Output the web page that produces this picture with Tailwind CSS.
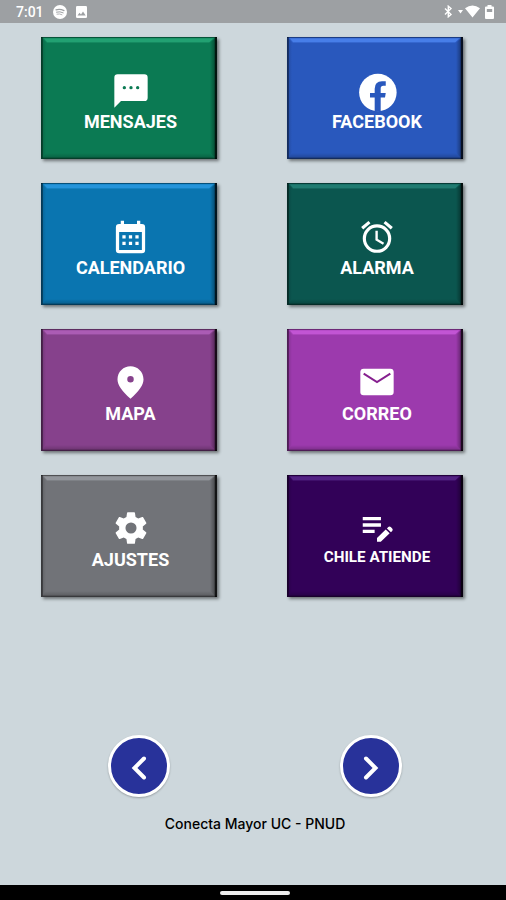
<!DOCTYPE html>
<html lang="es">
<head>
<meta charset="utf-8">
<title>Conecta Mayor UC</title>
<script src="https://cdn.jsdelivr.net/npm/@tailwindcss/browser@4"></script>
</head>
<body class="w-[506px] h-[900px] overflow-hidden bg-[#cdd7dc] flex flex-col font-['Roboto',sans-serif]">
<svg class="absolute size-0">
  <defs>
    <linearGradient id="dr"><stop offset="0" stop-color="#000" stop-opacity="0"/><stop offset="1" stop-color="#000" stop-opacity=".35"/></linearGradient>
    <linearGradient id="dl"><stop offset="0" stop-color="#000" stop-opacity=".15"/><stop offset="1" stop-color="#000" stop-opacity="0"/></linearGradient>
    <linearGradient id="db" x1="0" y1="0" x2="0" y2="1"><stop offset="0" stop-color="#000" stop-opacity="0"/><stop offset="1" stop-color="#000" stop-opacity=".2"/></linearGradient>
  </defs>
  <symbol id="bevel" viewBox="0 0 176 122">
    <path fill="url(#dr)" d="M174 1v120l-5-5V6z"/>
    <path fill="url(#dl)" d="M1 1l4 5v110l-4 5z"/>
    <path fill="url(#db)" d="M1 121l4-5h164l5 5z"/>
    <path fill="currentColor" fill-opacity=".35" d="M2 1h171l-5 5H6z"/>
    <path fill="currentColor" fill-opacity=".75" d="M3 1.500h169l-3.500 3.500H6z"/>
    <path fill="#000" fill-opacity=".3" d="M0 0h176v1H0z"/>
    <path fill="#000" fill-opacity=".5" d="M0 0h1.700v122H0zM0 120.800h176v1.200H0z"/>
    <path fill="#000" fill-opacity=".82" d="M173.800 0h2.200v122h-2.200z"/>
  </symbol>
</svg>

<header class="h-[23px] shrink-0 bg-[#9da0a3] flex items-center text-white pl-4 pr-3">
  <span class="text-[14px] leading-none font-medium w-[37px]">7:01</span>
  <svg class="size-[14px] mt-[1px]" viewBox="0 0 14 14"><circle cx="7" cy="7" r="7" fill="#fff"/><g fill="none" stroke="#9da0a3" stroke-linecap="round"><path stroke-width="1.200" d="M3 4.900q4-1.200 8 .7"/><path d="M3.500 7.100q3.500-1 6.700.7"/><path stroke-width=".8" d="M4 9.100q2.700-.7 5 .6"/></g></svg>
  <svg class="w-[11px] h-3 ml-[9px] mt-[1px]" viewBox="0 0 11 12"><rect width="11" height="12" rx="1.300" fill="#fff"/><path fill="#9da0a3" d="M1.500 9.500l2-2.800 1.500 1.800 2-3 2.700 4z"/></svg>
  <svg class="w-[9px] h-[13px] ml-auto" viewBox="0 0 9 13" fill="none" stroke="#fff" stroke-width="1.400"><path d="M1 3.500l6 6-2.700 2.300V1.200L7 3.500l-6 6"/></svg>
  <svg class="w-[22px] h-[13px] ml-[5px]" viewBox="0 0 22 13" fill="#fff"><path d="M0 5h5L2.500 8.500zM7 3.200q7.500-5.400 15 0L14.500 12.500z"/></svg>
  <svg class="w-[9px] h-[14px] ml-[5px]" viewBox="0 0 9 14"><path fill="#fff" d="M2.500 0h4v1.500H8q1 0 1 1V13q0 1-1 1H1q-1 0-1-1V2.500q0-1 1-1h1.500z"/><path fill="#9da0a3" d="M1.800 4h5.400v3H1.800z"/></svg>
</header>

<main class="flex-1 flex flex-col pt-[14px]">
  <div class="grid grid-cols-[176px_176px] auto-rows-[122px] gap-x-[70px] gap-y-6 pl-[41px] text-white text-[18px] leading-none font-bold">
    <button class="relative bg-[#0b7a53] shadow-[2px_2px_3px_#0007] flex flex-col items-center pl-[3px]">
      <svg class="absolute inset-0 size-full text-[#27a878]"><use href="#bevel"/></svg>
      <span class="h-[76px] pt-[34px]"><svg class="size-10" viewBox="0 0 24 24" fill="#fff"><path fill-rule="evenodd" d="M20 2H4a2 2 0 0 0-2 2v18l4-4h14a2 2 0 0 0 2-2V4a2 2 0 0 0-2-2zM9 10a1 1 0 1 0-2 0 1 1 0 0 0 2 0m4 0a1 1 0 1 0-2 0 1 1 0 0 0 2 0m4 0a1 1 0 1 0-2 0 1 1 0 0 0 2 0"/></svg></span>
      <span>MENSAJES</span>
    </button>
    <button class="relative bg-[#2958bd] shadow-[2px_2px_3px_#0007] flex flex-col items-center pl-1">
      <svg class="absolute inset-0 size-full text-[#4e85f0]"><use href="#bevel"/></svg>
      <span class="h-[76px] pt-[33px]"><svg class="size-[45px]" viewBox="0 0 24 24"><circle cx="12.200" cy="12" r="10" fill="#fff"/><path fill="#2958bd" d="M10.500 22.200v-7.500H8v-2.500h2.500V10q0-4 3.900-4h2v2.400h-1.300q-1.400 0-1.400 1.500v2.300h2.700l-.4 2.500h-2.300v7.500z"/></svg></span>
      <span>FACEBOOK</span>
    </button>
    <button class="relative bg-[#0a75b0] shadow-[2px_2px_3px_#0007] flex flex-col items-center pl-[3px]">
      <svg class="absolute inset-0 size-full text-[#2b9ae2]"><use href="#bevel"/></svg>
      <span class="h-[76px] pt-[36px]"><svg class="size-[39px]" viewBox="0 0 24 24" fill="#fff"><path d="M9 10v2H7v-2zm4 0v2h-2v-2zm4 0v2h-2v-2zm2-7a2 2 0 0 1 2 2v14a2 2 0 0 1-2 2H5a2 2 0 0 1-2-2V5a2 2 0 0 1 2-2h1V1h2v2h8V1h2v2zm0 16V8H5v11zM9 14v2H7v-2zm4 0v2h-2v-2zm4 0v2h-2v-2z"/></svg></span>
      <span>CALENDARIO</span>
    </button>
    <button class="relative bg-[#0b564f] shadow-[2px_2px_3px_#0007] flex flex-col items-center pl-1">
      <svg class="absolute inset-0 size-full text-[#248378]"><use href="#bevel"/></svg>
      <span class="h-[76px] pt-[35px]"><svg class="size-[38px]" viewBox="0 0 24 24" fill="#fff"><path d="M12 20a7 7 0 1 1 0-14 7 7 0 0 1 0 14m0-16a9 9 0 1 0 0 18 9 9 0 0 0 0-18m.5 4H11v6l4.750 2.850.75-1.230-4-2.370zM7.880 3.390L6.600 1.860 2 5.710l1.290 1.530zM22 5.720l-4.600-3.860-1.290 1.530 4.600 3.860z"/></svg></span>
      <span>ALARMA</span>
    </button>
    <button class="relative bg-[#86418c] shadow-[2px_2px_3px_#0007] flex flex-col items-center pl-[3px]">
      <svg class="absolute inset-0 size-full text-[#b361bc]"><use href="#bevel"/></svg>
      <span class="h-[76px] pt-[34px]"><svg class="size-[39px]" viewBox="0 0 24 24" fill="#fff"><path d="M12 2c-4.200 0-8 3.220-8 8.200 0 3.320 2.670 7.250 8 11.800 5.330-4.550 8-8.480 8-11.800C20 5.220 16.200 2 12 2zm0 10a2 2 0 1 1 0-4 2 2 0 0 1 0 4z"/></svg></span>
      <span>MAPA</span>
    </button>
    <button class="relative bg-[#9c3aad] shadow-[2px_2px_3px_#0007] flex flex-col items-center pl-1">
      <svg class="absolute inset-0 size-full text-[#ca5bdc]"><use href="#bevel"/></svg>
      <span class="h-[76px] pt-[33px]"><svg class="size-10" viewBox="0 0 24 24"><rect x="2" y="4" width="20" height="16" rx="2" fill="#fff"/><path d="M4 7l8 5 8-5" fill="none" stroke="#86208f" stroke-width="1.200"/></svg></span>
      <span>CORREO</span>
    </button>
    <button class="relative bg-[#717378] shadow-[2px_2px_3px_#0007] flex flex-col items-center pl-[3px]">
      <svg class="absolute inset-0 size-full text-[#999ca1]"><use href="#bevel"/></svg>
      <span class="h-[76px] pt-[34px]"><svg class="size-[38px]" viewBox="0 0 24 24" fill="#fff"><path d="M12 15.500A3.500 3.500 0 0 1 8.500 12 3.500 3.500 0 0 1 12 8.500a3.500 3.500 0 0 1 3.500 3.500 3.500 3.500 0 0 1-3.500 3.500m7.430-2.530c.04-.32.070-.64.070-.97s-.03-.66-.07-1l2.110-1.630c.19-.15.240-.42.120-.64l-2-3.460c-.12-.22-.39-.31-.61-.22l-2.490 1c-.52-.39-1.060-.73-1.690-.98l-.37-2.650A.506.506 0 0 0 14 2h-4c-.25 0-.46.180-.5.420l-.37 2.650c-.63.250-1.170.590-1.690.980l-2.490-1c-.22-.09-.49 0-.61.220l-2 3.460c-.13.220-.07.490.12.640L4.570 11c-.04.340-.07.670-.07 1s.03.650.07.970l-2.110 1.660c-.19.150-.25.420-.12.640l2 3.460c.12.220.39.300.61.220l2.490-1.010c.52.400 1.060.740 1.690.990l.37 2.650c.04.240.25.420.5.420h4c.25 0 .46-.18.500-.42l.37-2.650c.63-.26 1.170-.59 1.690-.99l2.490 1.010c.22.080.49 0 .61-.22l2-3.460c.12-.22.070-.49-.12-.64z"/></svg></span>
      <span>AJUSTES</span>
    </button>
    <button class="relative bg-[#320158] shadow-[2px_2px_3px_#0007] flex flex-col items-center pl-1">
      <svg class="absolute inset-0 size-full text-[#5a2a8c]"><use href="#bevel"/></svg>
      <span class="h-[74px] pt-[33px]"><svg class="size-[38px]" viewBox="0 0 24 24" fill="#fff"><path d="M3 5.700h11.500v2.100H3zM3 9.700h11.500v2.100H3zM3 13.700h7.500v2.100H3zM18.300 12.870l.8-.8a1.200 1.200 0 0 1 1.600 0l.9.900a1.200 1.200 0 0 1 0 1.600l-.8.800zM17.500 13.580L12 19v2.300h2.400l5.600-5.300z"/></svg></span>
      <span class="text-[15.200px] leading-4">CHILE ATIENDE</span>
    </button>
  </div>

  <nav class="mt-[138px] flex gap-[170px] pl-[108px]">
    <button class="size-[62px] rounded-full border-[3.500px] border-white bg-[#28329a] shadow-[0_1px_2px_#0004] flex items-center justify-center"><svg class="size-[26px] mt-[3px]" viewBox="0 0 26 26" fill="none" stroke="#fff" stroke-width="4" stroke-linecap="round"><path d="M18 3.500L8.500 13l9.500 9.500"/></svg></button>
    <button class="size-[62px] rounded-full border-[3.500px] border-white bg-[#28329a] shadow-[0_1px_2px_#0004] flex items-center justify-center"><svg class="size-[26px] mt-[3px]" viewBox="0 0 26 26" fill="none" stroke="#fff" stroke-width="4" stroke-linecap="round"><path d="M8 3.500l9.500 9.500L8 22.500"/></svg></button>
  </nav>
  <p class="mt-[17px] pl-1 text-center font-['Inter',sans-serif] text-[14px] leading-5 font-medium text-black">Conecta Mayor UC - PNUD</p>
</main>

<footer class="h-[15px] shrink-0 bg-black flex justify-center pt-[6px] pl-1">
  <span class="w-[70px] h-[4px] rounded-sm bg-[#eee]"></span>
</footer>
</body>
</html>
